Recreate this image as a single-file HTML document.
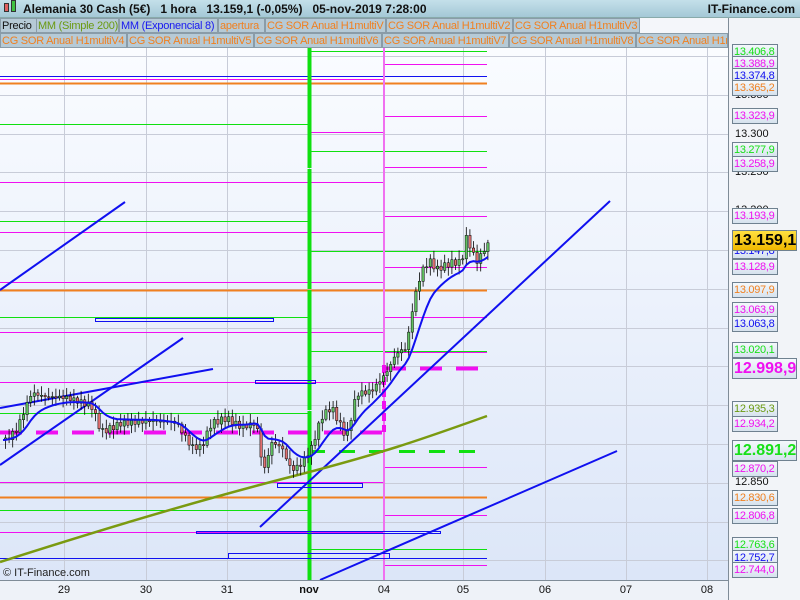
<!DOCTYPE html>
<html><head><meta charset="utf-8"><style>
*{margin:0;padding:0;box-sizing:border-box}
body{width:800px;height:600px;overflow:hidden;font-family:"Liberation Sans",sans-serif;background:#f4f6fa;position:relative}
#hdr{position:absolute;left:0;top:0;width:800px;height:18px;background:linear-gradient(#c4e0ea,#a4c8d6);border-bottom:1px solid #8aa;font-size:12px;font-weight:bold;color:#111;line-height:18px}
.leg{position:absolute;height:15px;font-size:11px;letter-spacing:-0.25px;line-height:14px;background:#b6cad6;border:1px solid #8a9ca8;color:#f08020;padding:0 1px;white-space:nowrap;overflow:hidden}
.lab{position:absolute;left:732px;width:46px;height:16px;border:1px solid #6f8190;background:linear-gradient(#f4f8fc,#d6e2ee);font-size:11px;letter-spacing:-0.3px;line-height:14px;padding-left:1px;white-space:nowrap;overflow:hidden}
.big{width:65px;height:21px;font-size:16px;letter-spacing:0;font-weight:bold;line-height:19px}
.tx{position:absolute;left:735px;font-size:11px;color:#111}
.xl{position:absolute;top:584px;font-size:11px;color:#111;transform:translateX(-50%)}
</style></head><body>
<div id="hdr"><span style="position:absolute;left:4px;top:3px;width:5px;height:9px;background:#e06060;border:1px solid #333"></span><span style="position:absolute;left:11px;top:0px;width:5px;height:12px;background:#40c040;border:1px solid #333"></span><span style="position:absolute;left:23px">Alemania 30 Cash (5€)&nbsp;&nbsp;&nbsp;1 hora&nbsp;&nbsp;&nbsp;13.159,1 (-0,05%)&nbsp;&nbsp;&nbsp;05-nov-2019 7:28:00</span><span style="position:absolute;right:5px">IT-Finance.com</span></div>
<svg width="800" height="600" style="position:absolute;left:0;top:0" id="s">
<defs><linearGradient id="bg" x1="0" y1="0" x2="0" y2="1"><stop offset="0" stop-color="#fafcff"/><stop offset="1" stop-color="#dce6f8"/></linearGradient></defs>
<rect x="0" y="48" width="728" height="532" fill="url(#bg)"/>
<rect x="728" y="18" width="72" height="582" fill="#f2f4f8"/>
<rect x="0" y="580" width="728" height="20" fill="#eef2f8"/>
<g stroke="#c8ccd8" stroke-width="1" id="grid"></g>
<g id="lv" fill="none"></g>
<line x1="728.5" y1="18" x2="728.5" y2="600" stroke="#7f8c98"/>
<line x1="0" y1="580.5" x2="728" y2="580.5" stroke="#7f8c98"/>
</svg>
<div class="leg" style="left:0;top:18px;width:37px;color:#111">Precio</div>
<div class="leg" style="left:36px;top:18px;width:83px;color:#6a9a10">MM (Simple 200)</div>
<div class="leg" style="left:119px;top:18px;width:99px;color:#1818f0">MM (Exponencial 8)</div>
<div class="leg" style="left:218px;top:18px;width:47px">apertura</div>
<div class="leg" style="left:265px;top:18px;width:121px">CG SOR Anual H1multiV</div>
<div class="leg" style="left:386px;top:18px;width:127px">CG SOR Anual H1multiV2</div>
<div class="leg" style="left:513px;top:18px;width:127px">CG SOR Anual H1multiV3</div>
<div class="leg" style="left:0;top:33px;width:127px">CG SOR Anual H1multiV4</div>
<div class="leg" style="left:127px;top:33px;width:127px">CG SOR Anual H1multiV5</div>
<div class="leg" style="left:254px;top:33px;width:128px">CG SOR Anual H1multiV6</div>
<div class="leg" style="left:382px;top:33px;width:127px">CG SOR Anual H1multiV7</div>
<div class="leg" style="left:509px;top:33px;width:127px">CG SOR Anual H1multiV8</div>
<div class="leg" style="left:636px;top:33px;width:92px">CG SOR Anual H1multiV9</div>
<div style="position:absolute;left:3px;top:567px;font-size:11px;color:#222">© IT-Finance.com</div>
<div class="tx" style="top:89px">13.350</div>
<div class="tx" style="top:128px">13.300</div>
<div class="tx" style="top:166px">13.250</div>
<div class="tx" style="top:204px">13.200</div>
<div class="tx" style="top:476px">12.850</div>
<div class="tx" style="top:515px">12.800</div>
<div class="lab" style="top:44px;color:#18e018">13.406,8</div>
<div class="lab" style="top:56px;color:#f010f0">13.388,9</div>
<div class="lab" style="top:68px;color:#1010f0">13.374,8</div>
<div class="lab" style="top:80px;color:#f08020">13.365,2</div>
<div class="lab" style="top:108px;color:#f010f0">13.323,9</div>
<div class="lab" style="top:142px;color:#18e018">13.277,9</div>
<div class="lab" style="top:156px;color:#f010f0">13.258,9</div>
<div class="lab" style="top:208px;color:#f010f0">13.193,9</div>
<div class="lab" style="top:243px;color:#1010f0">13.147,8</div>
<div class="lab" style="top:259px;color:#f010f0">13.128,9</div>
<div class="lab" style="top:282px;color:#f08020">13.097,9</div>
<div class="lab" style="top:302px;color:#f010f0">13.063,9</div>
<div class="lab" style="top:316px;color:#1010f0">13.063,8</div>
<div class="lab" style="top:342px;color:#18e018">13.020,1</div>
<div class="lab big" style="top:358px;color:#f010f0">12.998,9</div>
<div class="lab" style="top:401px;color:#6a9a10">12.935,3</div>
<div class="lab" style="top:416px;color:#f010f0">12.934,2</div>
<div class="lab big" style="top:440px;color:#18e018">12.891,2</div>
<div class="lab" style="top:461px;color:#f010f0">12.870,2</div>
<div class="lab" style="top:490px;color:#f08020">12.830,6</div>
<div class="lab" style="top:508px;color:#f010f0">12.806,8</div>
<div class="lab" style="top:537px;color:#18e018">12.763,6</div>
<div class="lab" style="top:550px;color:#1010f0">12.752,7</div>
<div class="lab" style="top:562px;color:#f010f0">12.744,0</div>
<div class="lab big" style="top:230px;background:linear-gradient(#ffe040,#f0b800);color:#000">13.159,1</div>
<div class="xl" style="left:64px">29</div><div class="xl" style="left:146px">30</div><div class="xl" style="left:227px">31</div><div class="xl" style="left:309px;font-weight:bold">nov</div><div class="xl" style="left:384px">04</div><div class="xl" style="left:463px">05</div><div class="xl" style="left:545px">06</div><div class="xl" style="left:626px">07</div><div class="xl" style="left:707px">08</div>
<script>
var NS="http://www.w3.org/2000/svg";var g=document.getElementById('grid'),L=document.getElementById('lv');
function el(p,t,a){var e=document.createElementNS(NS,t);for(var k in a)e.setAttribute(k,a[k]);p.appendChild(e);return e}
[64,146,227,309,384,463,545,626,707].forEach(function(x){el(g,'line',{x1:x+.5,y1:48,x2:x+.5,y2:580})});
for(var y=56;y<580;y+=38.8)el(g,'line',{x1:0,y1:Math.round(y)+.5,x2:728,y2:Math.round(y)+.5});
function h(x1,x2,y,c,w,d){var a={x1:x1,y1:y+.5,x2:x2,y2:y+.5,stroke:c,'stroke-width':w||1};if(d)a['stroke-dasharray']=d;el(L,'line',a)}
var M='#f010f0',G='#10e010',B='#1010f0',O='#f08020';
[[79,M],[182,M],[232,M],[282,M],[332,M],[382,M],[482,M],[532,M]].forEach(function(v){h(0,383,v[0],v[1])});
[[124,G],[221,G],[317,G],[413,G],[510,G]].forEach(function(v){h(0,309,v[0],v[1])});
[[132,M]].forEach(function(v){h(309,383,v[0],v[1])});
[[64,M],[116,M],[167,M],[216,M],[267,M],[317,M],[352,M],[467,M],[515,M],[565,M]].forEach(function(v){h(384,487,v[0],v[1])});
[[51,G],[151,G],[251,G],[351,G],[549,G]].forEach(function(v){h(309,487,v[0],v[1])});
h(0,487,76,B);h(0,487,558,B);h(0,487,83,O,2);h(0,487,290,O,2);h(0,487,497,O,2);
h(0,383,432,M,4,'22 14');h(384,487,368,M,4,'22 14');h(309,487,451,G,3,'16 14');
el(L,'line',{x1:309.5,y1:48,x2:309.5,y2:580,stroke:G,'stroke-width':4,'stroke-dasharray':'120 1'});
el(L,'line',{x1:384,y1:48,x2:384,y2:580,stroke:'#f070f0','stroke-width':2});
el(L,'line',{x1:384,y1:365,x2:384,y2:432,stroke:M,'stroke-width':4,'stroke-dasharray':'8 4'});
[[95,318,178,3],[255,380,60,3],[277,483,85,4],[196,531,244,2],[228,553,161,5]].forEach(function(r){el(L,'rect',{x:r[0]+.5,y:r[1]+.5,width:r[2],height:r[3],stroke:B,fill:'none'})});
[[0,290,125,202],[0,465,183,338],[0,408,213,369],[260,527,610,201],[320,580,617,451]].forEach(function(l){el(L,'line',{x1:l[0],y1:l[1],x2:l[2],y2:l[3],stroke:B,'stroke-width':2})});
el(L,'path',{d:'M0 562 C100 530 200 500 290 477 S420 440 487 416',stroke:'#7a9a10','stroke-width':2.5,fill:'none'});
var K=[[3,440],[15,430],[30,395],[45,400],[65,400],[90,405],[100,430],[120,420],[150,420],[175,425],[190,450],[200,450],[210,425],[225,418],[240,425],[255,420],[262,470],[270,440],[280,445],[290,470],[300,465],[310,450],[320,420],[330,410],[345,440],[355,395],[370,390],[385,370],[395,350],[405,345],[412,300],[420,270],[428,260],[435,270],[450,265],[460,265],[465,240],[475,265],[487,245]];
function py(x){for(var i=1;i<K.length;i++)if(x<=K[i][0]){var a=K[i-1],b=K[i];return a[1]+(b[1]-a[1])*(x-a[0])/(b[0]-a[0])}return 245}
var prev=py(3),ema=prev,ep='M3 '+prev;
for(var x=4;x<=487;x+=3.6){var c=py(x)+Math.sin(x*1.7)*3+Math.cos(x*.9)*3;var o=prev,up=c<o;
var hi=Math.min(o,c)-2-Math.abs(Math.sin(x*3.1))*7,lo=Math.max(o,c)+2+Math.abs(Math.cos(x*2.3))*7;
el(L,'line',{x1:x+1.5,y1:hi,x2:x+1.5,y2:lo,stroke:'#000','stroke-width':.8});
el(L,'rect',{x:x+.3,y:Math.min(o,c),width:2.4,height:Math.max(1,Math.abs(c-o)),fill:up?'#60c060':'#e07070',stroke:'#000','stroke-width':.5});
prev=c;ema=ema+(py(x)-ema)*0.18;ep+=' L'+(x+1.5).toFixed(1)+' '+ema.toFixed(1);}
el(L,'path',{d:ep,stroke:B,'stroke-width':2,fill:'none'});
</script>
</body></html>
